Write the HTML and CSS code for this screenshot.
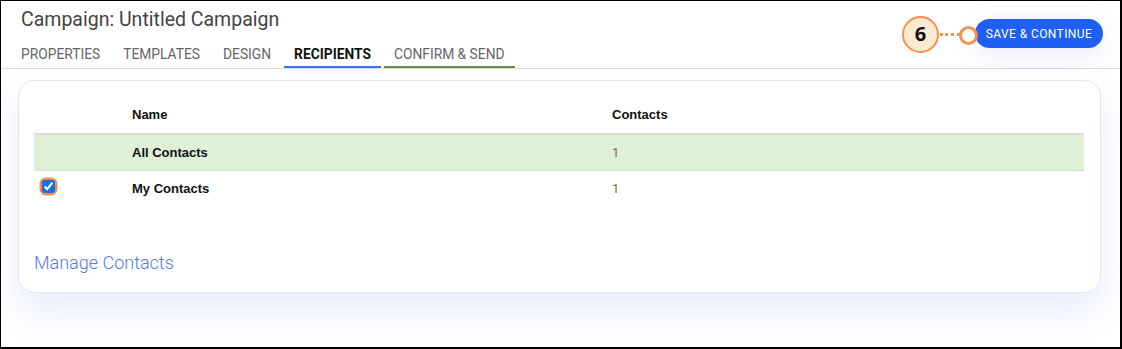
FILE: index.html
```html
<!DOCTYPE html>
<html>
<head>
<meta charset="utf-8">
<link rel="stylesheet" href="styles.css">
</head>
<body>
<div class="frame">
  <header class="header">
    <div class="head-left">
      <h1 class="title">Campaign: Untitled Campaign</h1>
      <nav class="tabs">
        <span class="tab">PROPERTIES</span>
        <span class="tab">TEMPLATES</span>
        <span class="tab">DESIGN</span>
        <span class="tab tab-active">RECIPIENTS</span>
        <span class="tab tab-next">CONFIRM &amp; SEND</span>
      </nav>
    </div>
    <div class="head-right">
      <div class="btn-wrap">
        <div class="callout">
          <span class="badge">6</span>
          <span class="dots"></span>
          <span class="ring"></span>
        </div>
        <button class="btn">SAVE &amp; CONTINUE</button>
      </div>
    </div>
  </header>
  <main class="content">
    <section class="card">
      <table class="table">
        <colgroup>
          <col class="col-check">
          <col class="col-name">
          <col class="col-count">
        </colgroup>
        <thead>
          <tr>
            <th></th>
            <th>Name</th>
            <th>Contacts</th>
          </tr>
        </thead>
        <tbody>
          <tr class="row-all">
            <td></td>
            <td class="name">All Contacts</td>
            <td class="count">1</td>
          </tr>
          <tr>
            <td><span class="check-ring"><input type="checkbox" class="check" checked></span></td>
            <td class="name">My Contacts</td>
            <td class="count">1</td>
          </tr>
        </tbody>
      </table>
      <a class="manage" href="#">Manage Contacts</a>
    </section>
  </main>
</div>
</body>
</html>
```
FILE: styles.css
```css
* { box-sizing: border-box; }
html, body { margin: 0; padding: 0; background: #fff; }
.frame {
  width: 1122px;
  height: 349px;
  border-style: solid;
  border-color: #000;
  border-width: 1px 2px 2px 1px;
  overflow: hidden;
  background: #fff;
  font-family: Roboto, "Liberation Sans", sans-serif;
}
.header {
  display: flex;
  justify-content: space-between;
  align-items: flex-start;
  border-bottom: 1px solid #dcdcdc;
  padding: 0 17px 0 10px;
}
.head-left { display: flex; flex-direction: column; }
.title {
  margin: 7px 0 0 10px;
  font-size: 19.5px;
  line-height: 24px;
  font-weight: 400;
  color: #444;
}
.tabs { display: flex; gap: 3px; margin-top: 12px; }
.tab {
  padding: 0 10px;
  font-size: 13.8px;
  line-height: 21px;
  height: 24px;
  color: #666;
  border-bottom: 2px solid transparent;
}
.tab-active { color: #111; font-weight: 700; border-bottom-color: #3b73f0; }
.tab-next { border-bottom-color: #5f9148; }
.head-right { padding-top: 18px; }
.btn-wrap { position: relative; }
.btn {
  position: relative;
  z-index: 0;
  display: block;
  height: 29px;
  width: 128px;
  border: 0;
  border-radius: 15px;
  background: #1f5ff5;
  color: #fff;
  font-family: Roboto, sans-serif;
  font-size: 12px;
  font-weight: 400;
  letter-spacing: 0.4px;
  padding: 0;
  box-shadow: 0 6px 24px rgba(90, 90, 240, 0.14);
}
.callout {
  position: absolute;
  left: -73px;
  top: -3px;
  width: 90px;
  height: 38px;
}
.badge {
  position: absolute;
  left: 0;
  top: 0;
  width: 37px;
  height: 37px;
  border-radius: 50%;
  background: #fdead3;
  border: 2.5px solid #f7914f;
  font-family: "Open Sans", sans-serif;
  font-weight: 700;
  font-size: 20px;
  line-height: 32px;
  text-align: center;
  color: #111;
}
.dots {
  position: absolute;
  left: 38px;
  top: 17px;
  width: 20px;
  border-top: 3px dotted #f7914f;
}
.ring {
  position: absolute;
  left: 57px;
  top: 10px;
  width: 19px;
  height: 19px;
  border-radius: 50%;
  border: 3px solid #f7914f;
  background: #fff;
  z-index: 1;
}
.content { padding: 11px 19px 0 17px; }
.card {
  border: 1px solid #e6e6e6;
  border-radius: 16px;
  padding: 15px 16px 19px 15px;
  box-shadow: 0 18px 36px rgba(70, 110, 230, 0.13);
  background: #fff;
}
.table {
  width: 100%;
  border-collapse: collapse;
  font-family: "Liberation Sans", Arial, sans-serif;
  font-size: 13px;
}
.col-check { width: 90px; }
.col-name { width: 480px; }
.table th {
  text-align: left;
  font-weight: 700;
  color: #111;
  height: 38px;
  padding: 0 8px;
  border-bottom: 2px solid #dddddd;
}
.table td {
  height: 36px;
  padding: 0 8px;
  border-bottom: 1px solid #dddddd;
  vertical-align: middle;
}
.table tbody tr:last-child td { border-bottom: 0; }
.row-all td { background: #dff0d8; }
.name { font-weight: 700; color: #111; }
.count { color: #8a6a3a; font-family: Roboto, sans-serif; }
.check-ring {
  display: inline-flex;
  border-radius: 4px;
  box-shadow: 0 0 0 2.5px #f58a4f;
}
.check {
  margin: 0;
  width: 13px;
  height: 13px;
  accent-color: #1a6fe0;
  display: block;
}
.manage {
  display: block;
  margin-top: 47px;
  font-size: 18px;
  line-height: 20px;
  font-weight: 300;
  color: #5278f3;
  text-decoration: none;
}
```
